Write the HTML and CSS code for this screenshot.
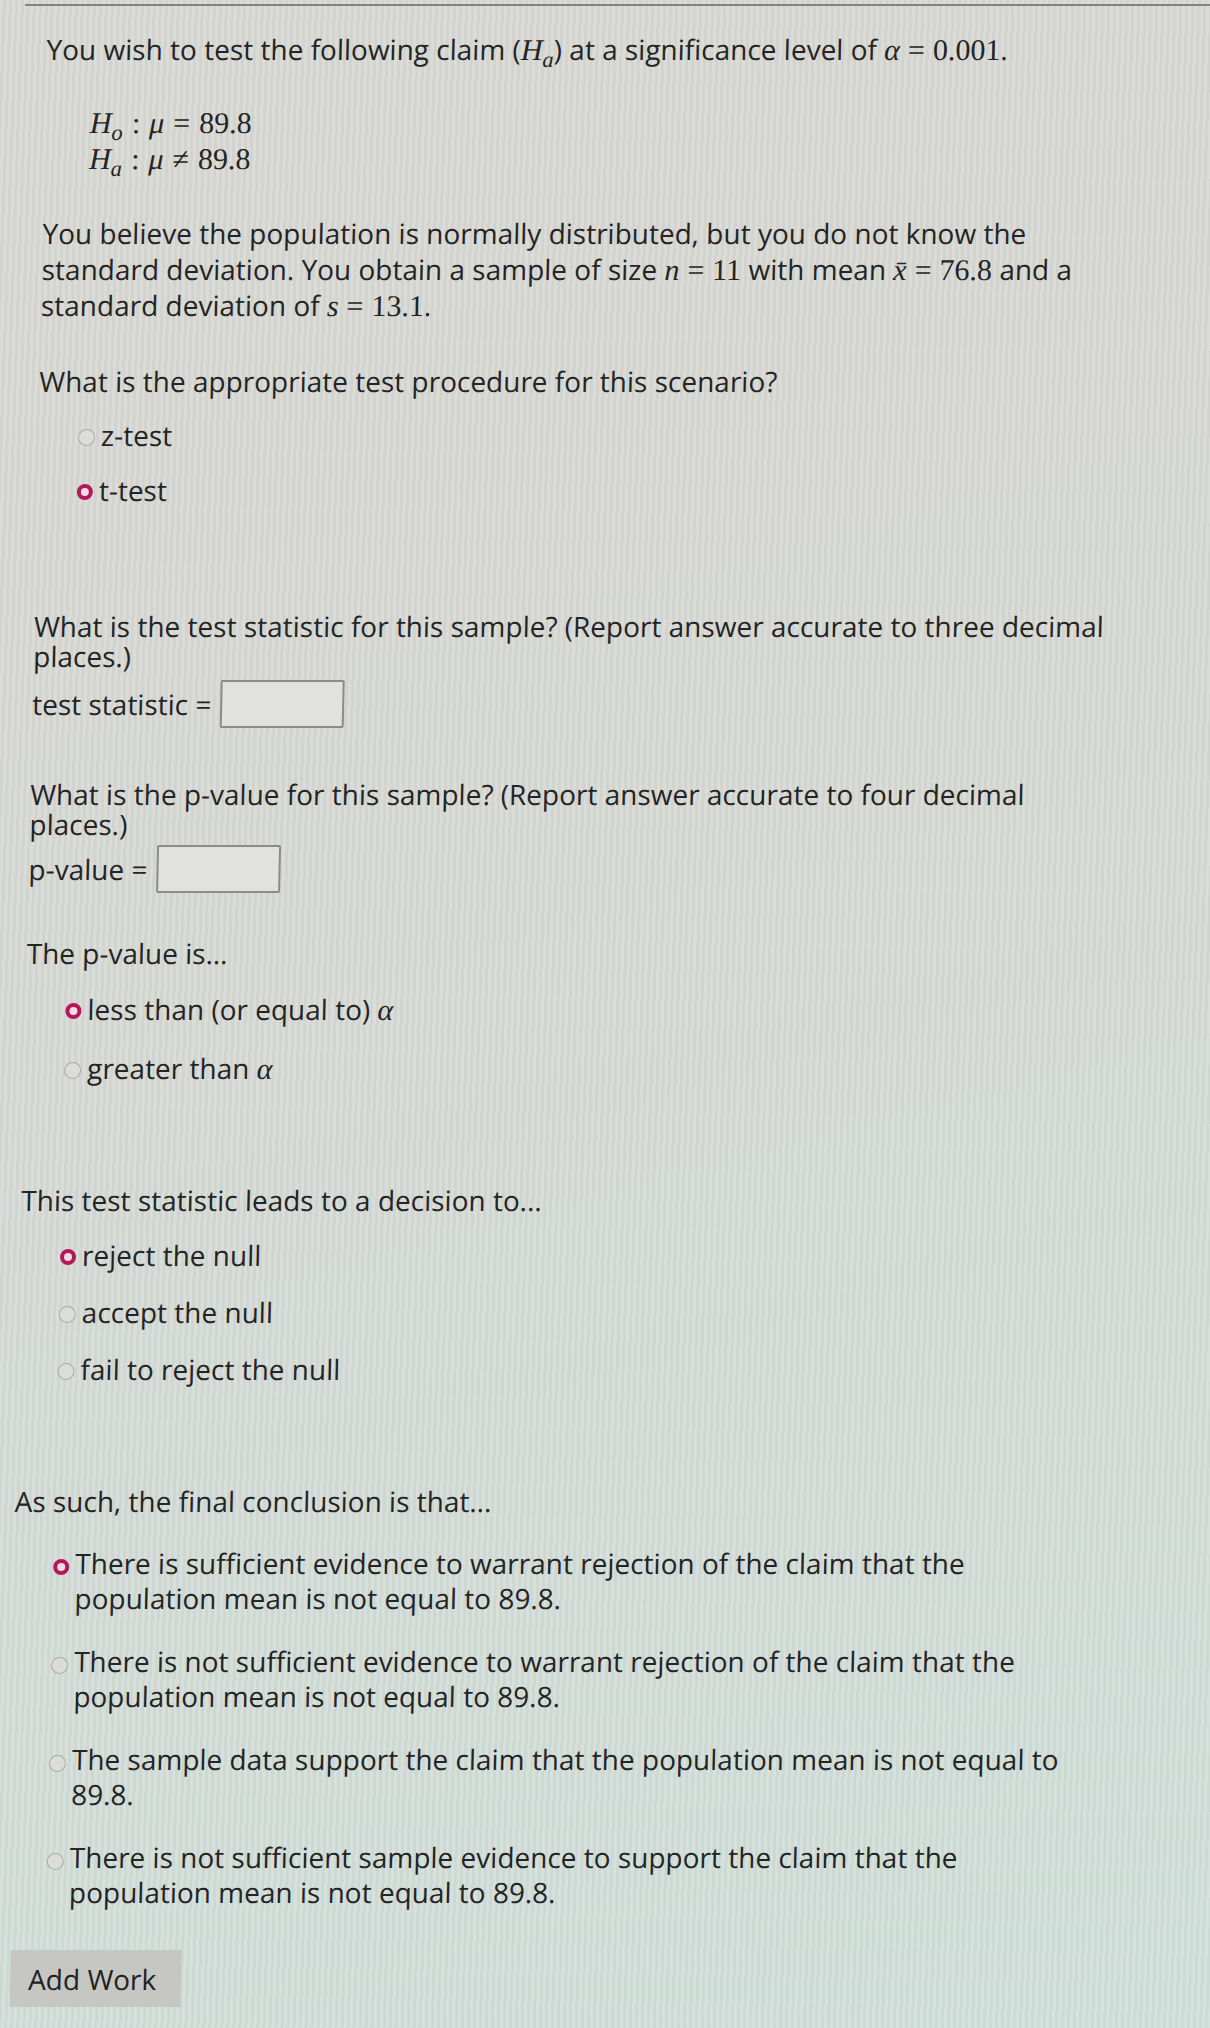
FILE: index.html
```html
<!DOCTYPE html>
<html lang="en">
<head>
  <meta charset="UTF-8">
  <meta name="viewport" content="width=device-width, initial-scale=1.0">
  <link rel="stylesheet" href="styles.css">
  <title>Hypothesis Test</title>
</head>
<body>
  <div class="rule"></div>

  <div class="page">
    <p class="intro">You wish to test the following claim (<span class="m"><i>H</i><sub>a</sub></span>) at a significance level of <span class="m"><i>α</i><span class="op">=</span>0.001</span>.</p>

    <div class="hyp">
      <div><i>H</i><sub>o</sub><span class="op">:</span><i>μ</i><span class="op">=</span>89.8</div>
      <div><i>H</i><sub>a</sub><span class="op">:</span><i>μ</i><span class="op">≠</span>89.8</div>
    </div>

    <p class="given">You believe the population is normally distributed, but you do not know the<br>standard deviation. You obtain a sample of size <span class="m"><i>n</i><span class="op">=</span>11</span> with mean <span class="m"><i>x&#772;</i><span class="op">=</span>76.8</span> and a<br>standard deviation of <span class="m"><i>s</i><span class="op">=</span>13.1</span>.</p>

    <!-- test procedure -->
    <p class="prompt q-proc">What is the appropriate test procedure for this scenario?</p>
    <ul class="choices c-proc">
      <li class="choice"><span class="radio"></span><span>z-test</span></li>
      <li class="choice"><span class="radio on"></span><span>t-test</span></li>
    </ul>

    <!-- test statistic -->
    <p class="prompt tight q-stat">What is the test statistic for this sample? (Report answer accurate to three decimal<br>places.)</p>
    <div class="fill f-stat"><span>test statistic =</span><input type="text" class="answer"></div>

    <!-- p-value -->
    <p class="prompt tight q-pval">What is the p-value for this sample? (Report answer accurate to four decimal<br>places.)</p>
    <div class="fill f-pval"><span>p-value =</span><input type="text" class="answer"></div>

    <p class="prompt q-cmp">The p-value is...</p>
    <ul class="choices c-cmp">
      <li class="choice"><span class="radio on"></span><span>less than (or equal to) <span class="m"><i>α</i></span></span></li>
      <li class="choice"><span class="radio"></span><span>greater than <span class="m"><i>α</i></span></span></li>
    </ul>

    <p class="prompt q-dec">This test statistic leads to a decision to...</p>
    <ul class="choices c-dec">
      <li class="choice"><span class="radio on"></span><span>reject the null</span></li>
      <li class="choice"><span class="radio"></span><span>accept the null</span></li>
      <li class="choice"><span class="radio"></span><span>fail to reject the null</span></li>
    </ul>

    <p class="prompt q-end">As such, the final conclusion is that...</p>
    <ul class="choices c-end">
      <li class="choice long"><span class="radio on"></span><span>There is sufficient evidence to warrant rejection of the claim that the<br>population mean is not equal to 89.8.</span></li>
      <li class="choice long"><span class="radio"></span><span>There is not sufficient evidence to warrant rejection of the claim that the<br>population mean is not equal to 89.8.</span></li>
      <li class="choice long"><span class="radio"></span><span>The sample data support the claim that the population mean is not equal to<br>89.8.</span></li>
      <li class="choice long"><span class="radio"></span><span>There is not sufficient sample evidence to support the claim that the<br>population mean is not equal to 89.8.</span></li>
    </ul>

    <button class="add-work">Add Work</button>
  </div>
</body>
</html>
```

FILE: styles.css
```css
html {
  background:
    repeating-linear-gradient(92deg, rgba(255, 255, 255, 0.10) 0 3px, rgba(0, 0, 0, 0.02) 3px 6px),
    linear-gradient(165deg, #d7d7d3 0%, #d6d8d4 45%, #cfdfd9 100%);
  min-height: 100%;
}

body {
  margin: 0;
  padding: 4px 0 0;
  min-height: 2024px;
  font-family: "Open Sans", "Liberation Sans", sans-serif;
  font-size: 28px;
  color: #242424;
}

.rule {
  height: 2px;
  margin-left: 25px;
  background-color: #82827f;
}

/* the photo leans a little, so the whole sheet is sheared */
.page {
  padding-left: 47px;
  transform: skewX(-1.26deg);
  transform-origin: 0 0;
}

p {
  margin: 0;
}

.m {
  font-family: "Liberation Serif", "DejaVu Serif", serif;
  font-size: 30px;
  line-height: 0;
}

.op {
  padding: 0 8px;
  font-style: normal;
}

i {
  font-style: italic;
}

sub {
  font-size: 0.75em;
  font-style: italic;
  line-height: 0;
  vertical-align: -0.3em;
}

.intro {
  margin-top: 25px;
  line-height: 36px;
}

.hyp {
  margin-top: 38px;
  margin-left: 45px;
  font-family: "Liberation Serif", "DejaVu Serif", serif;
  font-size: 30px;
  line-height: 36px;
}

.hyp .op {
  padding: 0 9px;
}

.given {
  margin-top: 38px;
  line-height: 36px;
}

.prompt {
  line-height: 36px;
}

.prompt.tight {
  line-height: 30px;
}

.q-proc { margin-top: 40px; }
.q-stat { margin-top: 103px; }
.q-pval { margin-top: 51px; }
.q-cmp  { margin-top: 42px; }
.q-dec  { margin-top: 96px; }
.q-end  { margin-top: 96px; }

.choices {
  list-style: none;
  margin: 0;
  padding: 0 0 0 40px;
  display: flex;
  flex-direction: column;
}

.c-proc { margin-top: 18px; gap: 19px; }
.c-cmp  { margin-top: 20px; gap: 23px; }
.c-dec  { margin-top: 19px; gap: 21px; }
.c-end  { margin-top: 27px; gap: 28px; }

.choice {
  display: flex;
  align-items: center;
  gap: 6px;
  height: 36px;
  line-height: 36px;
}

.choice.long {
  align-items: flex-start;
  height: auto;
  line-height: 35px;
}

.radio {
  flex: none;
  width: 17px;
  height: 17px;
  margin-top: 4px;
  box-sizing: border-box;
  border-radius: 50%;
  border: 1.5px solid #a9a9a6;
  background-color: #dcdcd9;
}

.radio.on {
  width: 16px;
  height: 16px;
  border: 4px solid #b3195a;
  background-color: #f1dbe5;
}

.choice.long .radio {
  margin-top: 13px;
}

.fill {
  display: flex;
  align-items: center;
  gap: 9px;
}

.f-stat { margin-top: 9px; }
.f-pval { margin-top: 6px; }

.answer {
  width: 124px;
  height: 48px;
  box-sizing: border-box;
  border: 2px solid #8b8b89;
  border-radius: 2px;
  background-color: #e1e2df;
}

.add-work {
  display: block;
  margin: 40px 0 0 6px;
  width: 171px;
  height: 57px;
  padding: 0 0 0 18px;
  border: none;
  background-color: #c6c7c3;
  font-family: "Open Sans", "Liberation Sans", sans-serif;
  font-size: 28px;
  color: #222;
  text-align: left;
  cursor: pointer;
}
```
